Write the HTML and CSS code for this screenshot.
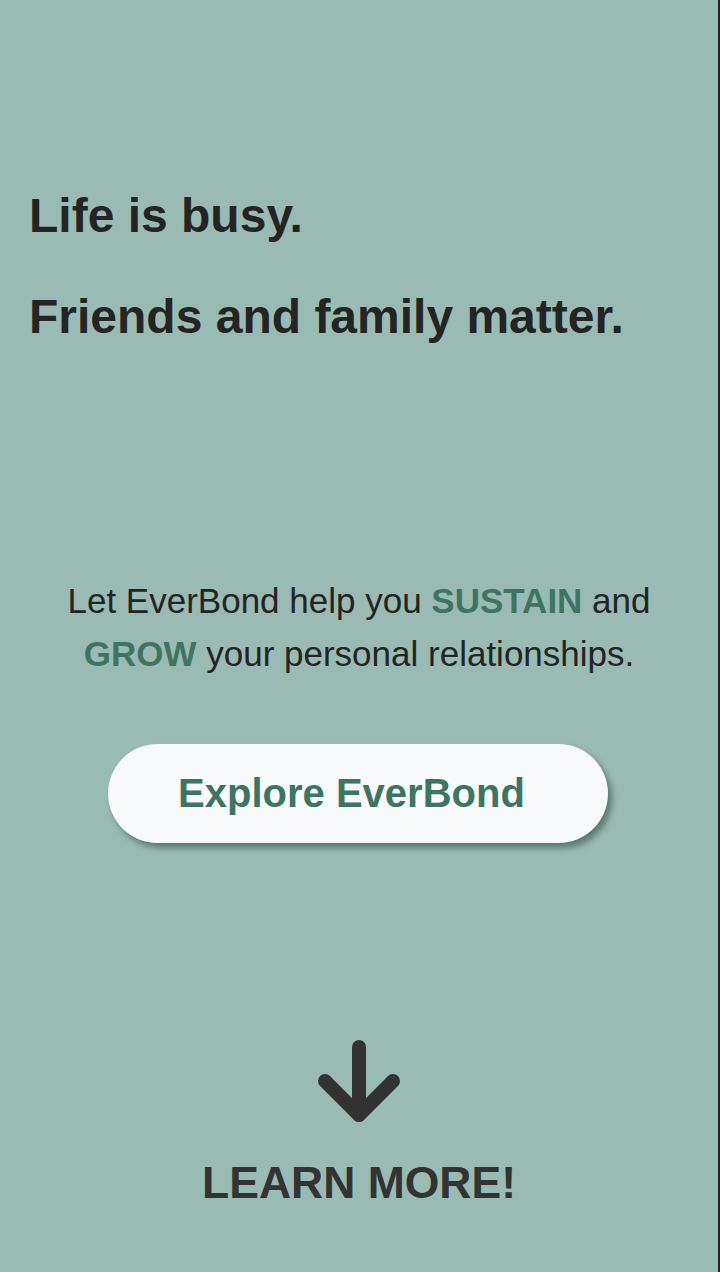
FILE: index.html
```html
<!DOCTYPE html>
<html lang="en">
<head>
<meta charset="utf-8">
<title>EverBond</title>
<link rel="stylesheet" href="styles.css">
</head>
<body>
<main class="page">
  <section class="hero">
    <h1 class="headline">Life is busy.</h1>
    <h1 class="headline headline-second">Friends and family matter.</h1>
  </section>
  <section class="pitch">
    <p class="pitch-text">Let EverBond help you <strong class="accent">SUSTAIN</strong> and <strong class="accent">GROW</strong> your personal relationships.</p>
    <button class="cta" type="button">Explore EverBond</button>
  </section>
  <section class="learn">
    <svg class="learn-arrow" width="100" height="100" viewBox="0 0 100 100" aria-hidden="true">
      <line x1="50" y1="17" x2="50" y2="85" stroke="#333333" stroke-width="14" stroke-linecap="round"/>
      <polyline points="16,51 50,85 84,51" fill="none" stroke="#333333" stroke-width="14" stroke-linecap="round" stroke-linejoin="round"/>
    </svg>
    <div class="learn-text">LEARN MORE!</div>
  </section>
</main>
</body>
</html>
```

FILE: styles.css
```css
html, body {
  margin: 0;
  padding: 0;
}

body {
  background: #9abbb3;
  font-family: "Liberation Sans", Arial, Helvetica, sans-serif;
  color: #242424;
}

.page {
  box-sizing: border-box;
  width: 720px;
  min-height: 1272px;
  border-right: 2px solid #242424;
  display: flex;
  flex-direction: column;
}

.hero {
  padding: 188px 0 0 29px;
}

.headline {
  margin: 0;
  font-size: 48px;
  line-height: 55px;
  font-weight: 700;
  color: #242424;
}

.headline-second {
  margin-top: 46px;
}

.pitch {
  display: flex;
  flex-direction: column;
  align-items: center;
  padding-top: 230px;
}

.pitch-text {
  margin: 0;
  padding: 0 40px;
  font-size: 35px;
  line-height: 53px;
  text-align: center;
  color: #242424;
}

.accent {
  color: #3e7562;
  font-weight: 700;
}

.cta {
  box-sizing: border-box;
  margin: 64px 2px 0 0;
  width: 500px;
  height: 99px;
  padding: 0 13px 0 0;
  border: none;
  border-radius: 50px;
  background: #f7f9fb;
  color: #3e7562;
  font-family: "Liberation Sans", Arial, Helvetica, sans-serif;
  font-size: 40px;
  font-weight: 700;
  box-shadow: 4px 5px 6px rgba(40, 70, 60, 0.55);
  cursor: pointer;
}

.learn {
  display: flex;
  flex-direction: column;
  align-items: center;
  padding-top: 187px;
}

.learn-arrow {
  display: block;
}

.learn-text {
  margin-top: 28px;
  font-size: 44.5px;
  line-height: 49px;
  font-weight: 700;
  color: #333333;
}
```
